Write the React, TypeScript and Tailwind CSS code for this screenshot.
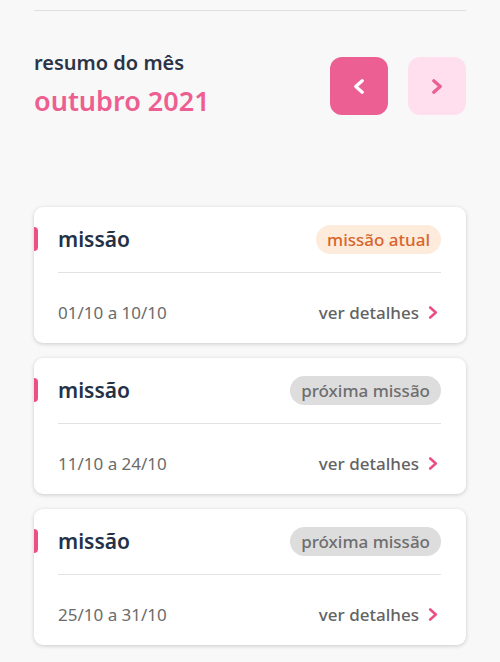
import React from "react";

const Chevron = ({ dir, className, sw = 2.6 }: { dir: "left" | "right"; className?: string; sw?: number }) => (
  <svg viewBox="0 0 10 13" className={className} fill="none" stroke="currentColor" strokeWidth={sw} strokeLinecap="round" strokeLinejoin="round">
    {dir === "left" ? <path d="M7.8 1.5 L2.2 6.5 L7.8 11.5" /> : <path d="M2.2 1.5 L7.8 6.5 L2.2 11.5" />}
  </svg>
);

type Mission = { dates: string; current: boolean };

const missions: Mission[] = [
  { dates: "01/10 a 10/10", current: true },
  { dates: "11/10 a 24/10", current: false },
  { dates: "25/10 a 31/10", current: false },
];

const Card = ({ m }: { m: Mission }) => (
  <div className="relative bg-white rounded-[9px] shadow-[0_1px_4px_rgba(0,0,0,0.18)] pl-6 pr-[25px] pt-[18px] pb-[19px]">
    <div className="absolute left-0 top-[20px] w-[4px] h-[24px] bg-[#ec4f85] rounded-r-sm" />
    <div className="flex items-center justify-between h-[29px]">
      <span className="text-[21px] font-semibold text-[#243147] leading-none">missão</span>
      {m.current ? (
        <span className="h-[29px] px-[11px] rounded-full bg-[#fdebdc] text-[#d8652b] text-[17px] font-medium flex items-center leading-none">missão atual</span>
      ) : (
        <span className="h-[29px] px-[11px] rounded-full bg-[#dddddd] text-[#6e6e6e] text-[17px] font-medium flex items-center leading-none">próxima missão</span>
      )}
    </div>
    <div className="mt-[18px] h-px bg-[#e2e2e2]" />
    <div className="mt-[27px] h-6 flex items-center justify-between">
      <span className="text-[17px] text-[#6b6b6b] leading-none">{m.dates}</span>
      <span className="flex items-center gap-[9px] mr-[3px]">
        <span className="text-[17px] font-medium text-[#636363] leading-none">ver detalhes</span>
        <Chevron dir="right" className="w-[10px] h-[13px] text-[#ec4f85]" />
      </span>
    </div>
  </div>
);

export default function App() {
  return (
    <div className="min-h-[662px] bg-[#f8f8f8] px-[34px] pt-[10px]" style={{ fontFamily: '"Noto Sans", "Open Sans", sans-serif' }}>
      <div className="h-px bg-[#e0e0e0]" />
      <div className="mt-[46px] h-[58px] flex items-start justify-between">
        <div className="-mt-[4px]">
          <div className="text-[20px] font-semibold text-[#2b3446] leading-[20px]">resumo do mês</div>
          <div className="mt-[11px] text-[27px] font-semibold text-[#ee5f91] leading-[34px]">outubro 2021</div>
        </div>
        <div className="flex gap-5">
          <button className="w-[58px] h-[58px] rounded-[12px] bg-[#ec5f92] flex items-center justify-center">
            <Chevron dir="left" sw={2.8} className="w-[12px] h-[15px] text-white" />
          </button>
          <button className="w-[58px] h-[58px] rounded-[12px] bg-[#ffdfed] flex items-center justify-center">
            <Chevron dir="right" sw={2.8} className="w-[12px] h-[15px] text-[#ec5f92]" />
          </button>
        </div>
      </div>
      <div className="mt-[92px] flex flex-col gap-[15px]">
        {missions.map((m, i) => (
          <Card key={i} m={m} />
        ))}
      </div>
    </div>
  );
}
